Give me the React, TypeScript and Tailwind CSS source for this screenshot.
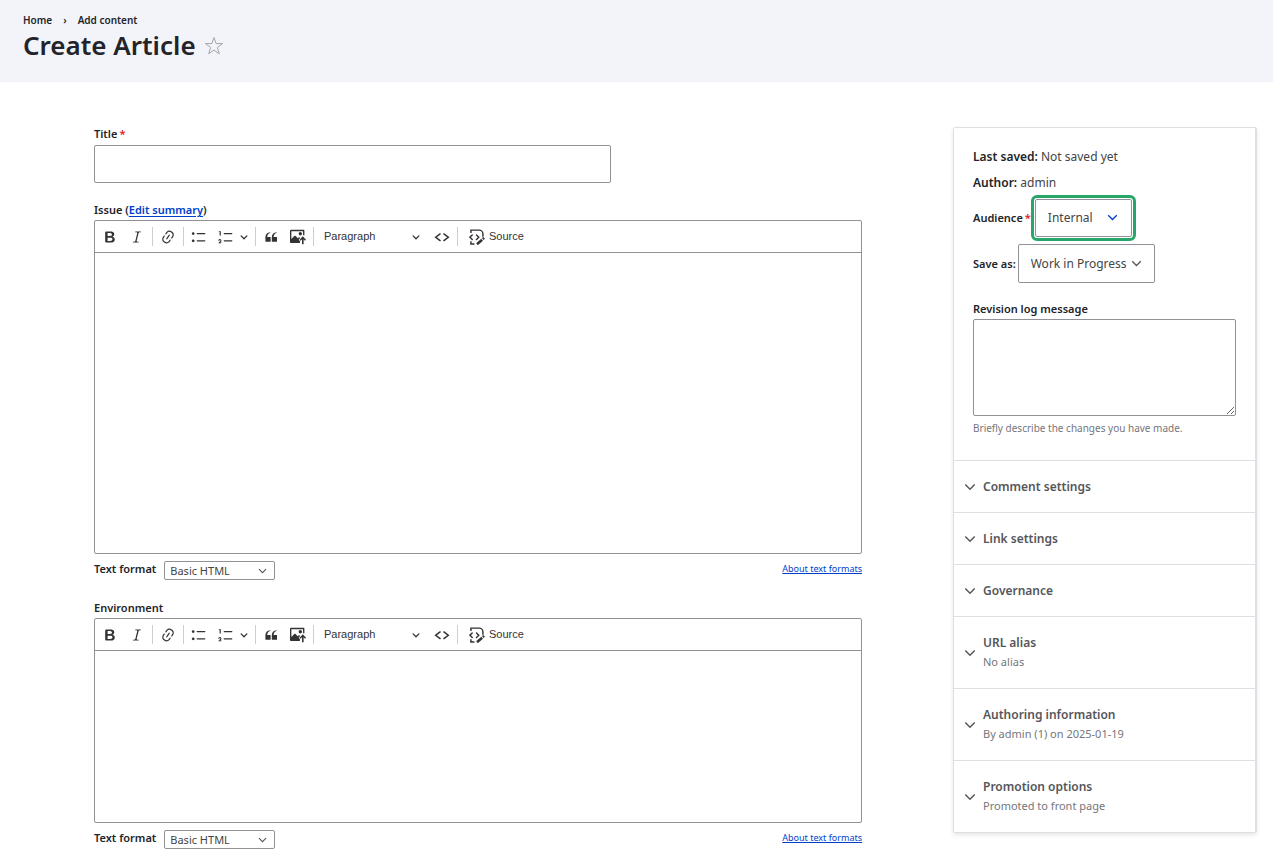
import type { ReactNode } from "react";

const PATHS = {
  bold: "M10.187 17H5.773c-.637 0-1.092-.138-1.364-.415-.273-.277-.409-.718-.409-1.323V4.738c0-.617.14-1.062.419-1.332.279-.27.73-.406 1.354-.406h4.68c.69 0 1.288.041 1.793.124.506.083.96.242 1.36.478.341.197.644.447.906.75a3.262 3.262 0 0 1 .808 2.162c0 1.401-.722 2.426-2.167 3.075C15.05 10.175 16 11.315 16 13.01a3.756 3.756 0 0 1-2.296 3.504 6.1 6.1 0 0 1-1.517.377c-.571.073-1.238.11-2 .11zm-.217-6.217H7v4.087h3.069c1.977 0 2.965-.69 2.965-2.072 0-.707-.256-1.22-.768-1.537-.512-.319-1.277-.478-2.296-.478zM7 5.13v3.619h2.606c.729 0 1.292-.067 1.69-.2a1.6 1.6 0 0 0 .91-.765c.165-.267.247-.566.247-.897 0-.707-.26-1.176-.778-1.409-.519-.232-1.31-.348-2.375-.348H7z",
  italic:
    "m9.586 14.633.021.004c-.036.335.095.655.393.962.082.083.173.15.274.201h1.474a.6.6 0 1 1 0 1.2H5.304a.6.6 0 0 1 0-1.2h1.15c.474-.07.809-.182 1.005-.334.157-.122.291-.32.404-.597l2.416-9.55a1.053 1.053 0 0 0-.281-.823 1.12 1.12 0 0 0-.442-.296H8.15a.6.6 0 0 1 0-1.2h6.443a.6.6 0 1 1 0 1.2h-1.195c-.376.056-.65.155-.823.296-.215.175-.423.439-.623.79l-2.366 9.347z",
  link: "m11.077 15 .991-1.416a.75.75 0 1 1 1.229.86l-1.148 1.64a.748.748 0 0 1-.217.206 5.251 5.251 0 0 1-8.503-5.955.741.741 0 0 1 .12-.274l1.147-1.639a.75.75 0 1 1 1.228.86L4.933 10.7l.006.003a3.75 3.75 0 0 0 6.132 4.294l.006.004zm5.494-5.335a.748.748 0 0 1-.12.274l-1.147 1.639a.75.75 0 1 1-1.228-.86l.86-1.23a3.75 3.75 0 0 0-6.144-4.301l-.86 1.229a.75.75 0 0 1-1.229-.86l1.148-1.64a.748.748 0 0 1 .217-.206 5.251 5.251 0 0 1 8.503 5.955zm-4.563-2.532a.75.75 0 0 1 .184 1.045l-3.155 4.505a.75.75 0 1 1-1.229-.86l3.155-4.506a.75.75 0 0 1 1.045-.184z",
  bullets:
    "M7 5.75c0 .414.336.75.75.75h9.5a.75.75 0 1 0 0-1.5h-9.5a.75.75 0 0 0-.75.75zm-6 0C1 4.784 1.777 4 2.75 4c.966 0 1.75.777 1.75 1.75 0 .966-.777 1.75-1.75 1.75C1.784 7.5 1 6.723 1 5.75zm6 9c0 .414.336.75.75.75h9.5a.75.75 0 1 0 0-1.5h-9.5a.75.75 0 0 0-.75.75zm-6 0c0-.966.777-1.75 1.75-1.75.966 0 1.75.777 1.75 1.75 0 .966-.777 1.75-1.75 1.75-.966 0-1.75-.777-1.75-1.75z",
  numbers:
    "M7 5.75c0 .414.336.75.75.75h9.5a.75.75 0 1 0 0-1.5h-9.5a.75.75 0 0 0-.75.75zM3.5 3v5H2V3.7H1v-1h2.5V3zM.343 17.857l2.59-3.257H2.92a.6.6 0 1 0-1.04 0H.302a2 2 0 1 1 3.995 0h-.001c-.048.405-.16.734-.333.988-.175.254-.59.692-1.244 1.312H4.3v1h-4l.043-.043zM7 14.75a.75.75 0 0 1 .75-.75h9.5a.75.75 0 1 1 0 1.5h-9.5a.75.75 0 0 1-.75-.75z",
  quote:
    "M3 10.423a6.5 6.5 0 0 1 6.056-6.408l.038.67C6.448 5.423 5.354 7.663 5.22 10H9c.552 0 .5.432.5.986v4.511c0 .554-.448.503-1 .503h-5c-.552 0-.5-.449-.5-1.003v-4.574zm8 0a6.5 6.5 0 0 1 6.056-6.408l.038.67c-2.646.739-3.74 2.979-3.873 5.315H17c.552 0 .5.432.5.986v4.511c0 .554-.448.503-1 .503h-5c-.552 0-.5-.449-.5-1.003v-4.574z",
  image:
    "M1.2 1C.54 1 0 1.47 0 2.1v14.36c0 .64.53 1.04 1.19 1.04H12.4v-2.6l-1.6-1.6 1.9-2-1.3-1.2-1.6 1.5-3.2-3.05a.7.7 0 0 0-.95-.03L1.7 12.6V2.7h14.6v5H18V2.1C18 1.47 17.45 1 16.8 1H1.2zM12.9 3.8a2.14 2.14 0 1 0 0 4.28 2.14 2.14 0 0 0 0-4.28zM16 9.2l4 4.1-1.3 1.3-1.7-1.7v6.2h-2v-6.2l-1.7 1.7-1.3-1.3 4-4.1z",
};

function Glyph({ d }: { d: string }) {
  return (
    <svg viewBox="0 0 20 20" className="size-4 shrink-0" fill="currentColor" aria-hidden="true">
      <path d={d} />
    </svg>
  );
}

function CodeGlyph() {
  return (
    <svg
      viewBox="0 0 20 20"
      className="size-4 shrink-0"
      fill="none"
      stroke="currentColor"
      strokeWidth="1.9"
      strokeLinecap="round"
      aria-hidden="true"
    >
      <path d="M7.6 6.2 2.2 10.3l5.4 4.1M12.4 6.2l5.4 4.1-5.4 4.1" />
    </svg>
  );
}

function SourceGlyph() {
  return (
    <svg
      viewBox="0 0 20 20"
      className="size-4 shrink-0"
      fill="none"
      stroke="currentColor"
      strokeWidth="1.8"
      aria-hidden="true"
    >
      <path d="M2.4 5V1.4h10.4c2.4 0 4.6 2.3 4.6 4.8v3.4M2.4 15.4v3.4h4.4" />
      <path d="M4 7.4 1.2 10.2 4 13M9.4 7.4l2.8 2.8L9.4 13" strokeLinecap="round" />
      <path d="m10 19 6.4-5.6M17.2 12.6l1.7-1.5" strokeWidth="3.2" />
    </svg>
  );
}

function Caret() {
  return (
    <svg
      viewBox="0 0 10 10"
      className="size-2 shrink-0"
      fill="none"
      stroke="currentColor"
      strokeWidth="1.6"
      strokeLinecap="round"
      aria-hidden="true"
    >
      <path d="m1.4 3.6 3.6 3.6 3.6-3.6" />
    </svg>
  );
}

function Chevron({ className }: { className: string }) {
  return (
    <svg
      viewBox="0 0 14 9"
      fill="none"
      stroke="currentColor"
      strokeWidth="1.7"
      className={className}
      aria-hidden="true"
    >
      <path d="m1.5 1.5 5.5 5.5 5.5-5.5" />
    </svg>
  );
}

function ToolButton({ label, children }: { label: string; children: ReactNode }) {
  return (
    <button type="button" aria-label={label} className="flex h-7 w-[26px] items-center justify-center">
      {children}
    </button>
  );
}

function Separator() {
  return <span className="mx-px h-[19px] w-px bg-[#ccced1]" />;
}

function Toolbar() {
  return (
    <div
      role="toolbar"
      className="flex h-8 items-center gap-px border-b border-[#919297] pl-0.5 font-['Liberation_Sans',sans-serif] text-[11px] text-[#333]"
    >
      <ToolButton label="Bold"><Glyph d={PATHS.bold} /></ToolButton>
      <ToolButton label="Italic"><Glyph d={PATHS.italic} /></ToolButton>
      <Separator />
      <ToolButton label="Link"><Glyph d={PATHS.link} /></ToolButton>
      <Separator />
      <ToolButton label="Bulleted list"><Glyph d={PATHS.bullets} /></ToolButton>
      <ToolButton label="Numbered list"><Glyph d={PATHS.numbers} /></ToolButton>
      <button type="button" aria-label="List options" className="flex h-7 w-[13px] items-center justify-start">
        <Caret />
      </button>
      <Separator />
      <ToolButton label="Block quote"><Glyph d={PATHS.quote} /></ToolButton>
      <ToolButton label="Insert image"><Glyph d={PATHS.image} /></ToolButton>
      <Separator />
      <button type="button" className="flex h-7 w-28 items-center justify-between px-2">
        Paragraph
        <Caret />
      </button>
      <ToolButton label="Code block"><CodeGlyph /></ToolButton>
      <Separator />
      <button type="button" className="flex h-7 items-center gap-1 px-[9px]">
        <SourceGlyph />
        Source
      </button>
    </div>
  );
}

type EditorProps = { id: string; label: ReactNode; name: string; bodyClass: string };

function Editor({ id, label, name, bodyClass }: EditorProps) {
  return (
    <section>
      <div className="text-[11px] leading-4 font-semibold text-[#232429]">{label}</div>
      <div className="mt-0.5 rounded-[2px] border border-[#919297] bg-white">
        <Toolbar />
        <textarea id={id} aria-label={name} className={bodyClass} />
      </div>
      <div className="mt-[7px] flex items-start justify-between">
        <div className="flex items-start gap-2">
          <label htmlFor={id + "-format"} className="text-[11px] leading-4 font-semibold text-[#232429]">
            Text format
          </label>
          <div className="relative">
            <select
              id={id + "-format"}
              className="block h-[19px] w-[111px] appearance-none rounded-[2px] border border-[#919297] bg-white pl-[5px] text-[11px] leading-4 text-[#444]"
            >
              <option>Basic HTML</option>
            </select>
            <Chevron className="pointer-events-none absolute top-[7px] right-2 h-[6px] w-[9px] text-[#55565b]" />
          </div>
        </div>
        <a href="#formats" className="text-[9px] leading-4 text-[#003ecc] underline underline-offset-1">
          About text formats
        </a>
      </div>
    </section>
  );
}

const DETAILS: { title: string; summary?: string }[] = [
  { title: "Comment settings" },
  { title: "Link settings" },
  { title: "Governance" },
  { title: "URL alias", summary: "No alias" },
  { title: "Authoring information", summary: "By admin (1) on 2025-01-19" },
  { title: "Promotion options", summary: "Promoted to front page" },
];

export default function App() {
  return (
    <div className="min-h-screen overflow-x-hidden bg-white font-['Noto_Sans',sans-serif] text-[#232429]">
      <header className="h-[82px] bg-[#f3f4f9] pt-3 pl-[23px]">
        <nav aria-label="Breadcrumb" className="flex items-center text-[10px] leading-4 font-semibold">
          <a href="#home">Home</a>
          <span className="px-[11px]">›</span>
          <a href="#add">Add content</a>
        </nav>
        <div className="flex items-center gap-2">
          <h1 className="text-[26px] leading-[34px] font-semibold">Create Article</h1>
          <button type="button" aria-label="Add to shortcuts">
            <svg viewBox="0 0 20 20" className="mt-0.5 size-5" fill="none" stroke="#a3a5ad" aria-hidden="true">
              <path d="m10 1.5 2.1 6.1h6.4l-5.2 3.9 2 6.3-5.3-3.8-5.3 3.8 2-6.3-5.2-3.9h6.4z" />
            </svg>
          </button>
        </div>
      </header>

      <main className="flex items-start gap-[91px] pt-11 pr-4 pb-4 pl-[94px]">
        <form className="min-w-0 flex-1">
          <label htmlFor="title" className="block text-[11px] leading-4 font-semibold">
            Title<span className="ml-0.5 text-[#dc2323]">*</span>
          </label>
          <input
            id="title"
            type="text"
            required
            className="mt-[3px] block h-[38px] w-full max-w-[517px] rounded-[2px] border border-[#919297] bg-white px-3 shadow-none"
          />
          <div className="mt-[19px]">
            <Editor
              id="issue"
              name="Issue"
              label={
                <>
                  Issue (<a href="#summary" className="text-[#003ecc] underline underline-offset-2">Edit summary</a>)
                </>
              }
              bodyClass="block h-[300px] w-full resize-none p-2 outline-none"
            />
          </div>
          <div className="mt-5">
            <Editor
              id="environment"
              name="Environment"
              label="Environment"
              bodyClass="block h-[171px] w-full resize-none p-2 outline-none"
            />
          </div>
        </form>

        <aside className="mt-px w-[304px] shrink-0 rounded-[2px] border border-r-2 border-[#dedfe4] bg-white shadow-[0_2px_4px_rgba(0,0,0,0.1)]">
          <div className="px-[19px] pt-[19px] pb-6">
            <p className="text-[12px] leading-5">
              <strong className="font-semibold">Last saved:</strong> <span className="text-[#444]">Not saved yet</span>
            </p>
            <p className="mt-1.5 text-[12px] leading-5">
              <strong className="font-semibold">Author:</strong> <span className="text-[#444]">admin</span>
            </p>
            <div className="mt-1.5 flex items-center gap-1">
              <label htmlFor="audience" className="text-[11px] leading-4 font-semibold">
                Audience<span className="ml-0.5 text-[#dc2323]">*</span>
              </label>
              <div className="relative">
                <select
                  id="audience"
                  className="block h-[38px] w-[97px] appearance-none rounded-[2px] border border-[#919297] bg-white pl-3 text-[12px] text-[#444] outline-3 outline-offset-1 outline-[#26a769]"
                >
                  <option>Internal</option>
                </select>
                <Chevron className="pointer-events-none absolute top-[15px] right-[14px] h-[7px] w-[11px] text-[#003ecc]" />
              </div>
            </div>
            <div className="mt-[7px] flex items-center gap-0.5">
              <label htmlFor="save-as" className="text-[11px] leading-4 font-semibold">
                Save as:
              </label>
              <div className="relative">
                <select
                  id="save-as"
                  className="block h-[39px] w-[137px] appearance-none rounded-[2px] border border-[#919297] bg-white pl-3 text-[12px] text-[#444]"
                >
                  <option>Work in Progress</option>
                </select>
                <Chevron className="pointer-events-none absolute top-4 right-[13px] h-[7px] w-[11px] text-[#55565b]" />
              </div>
            </div>
            <label htmlFor="log" className="mt-[18px] block text-[11px] leading-4 font-semibold">
              Revision log message
            </label>
            <textarea
              id="log"
              className="mt-0.5 block h-[97px] w-full resize-y rounded-[2px] border border-[#919297] bg-white p-2"
            />
            <p className="mt-1 text-[10px] leading-4 text-[#75767b]">Briefly describe the changes you have made.</p>
          </div>
          {DETAILS.map((item) => (
            <button
              key={item.title}
              type="button"
              className="flex w-full items-center gap-[7px] border-t border-[#dedfe4] py-4 pl-[10px] text-left"
            >
              <Chevron className="h-2 w-3 shrink-0 text-[#55565b]" />
              <span>
                <span className="block text-[12px] leading-[19px] font-semibold text-[#55565b]">{item.title}</span>
                {item.summary && <span className="block text-[11px] leading-5 text-[#75767b]">{item.summary}</span>}
              </span>
            </button>
          ))}
        </aside>
      </main>
    </div>
  );
}
